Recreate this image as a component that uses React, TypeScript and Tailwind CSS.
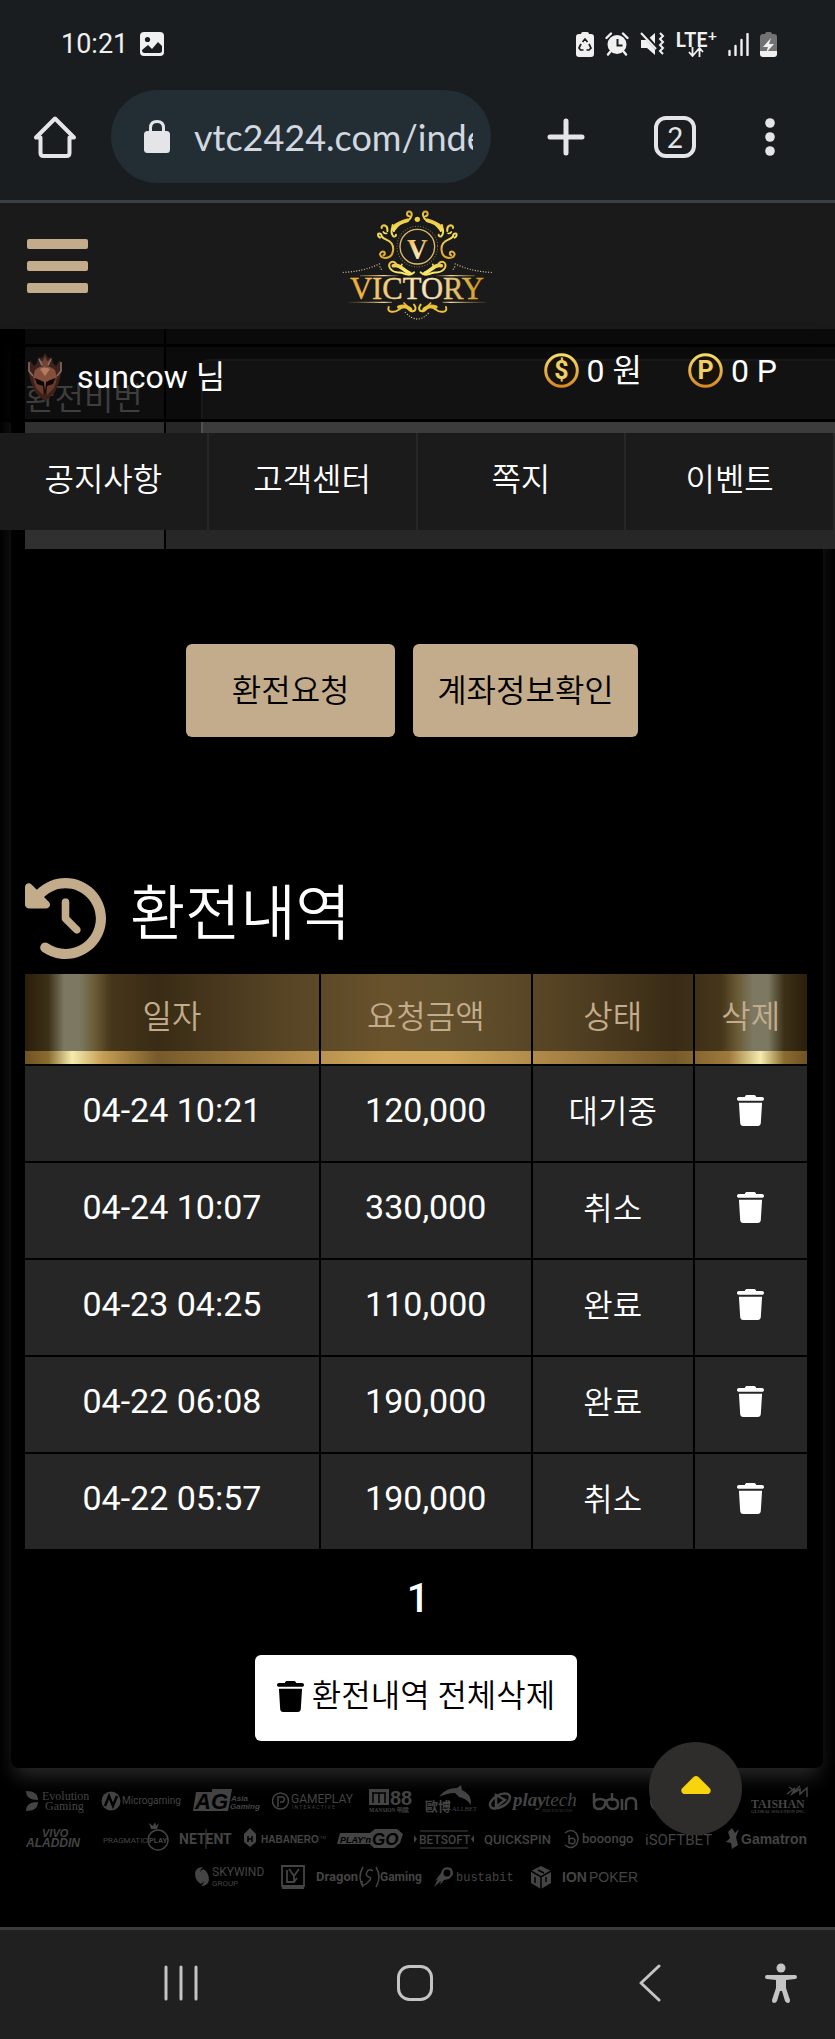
import React, { useState } from 'react';
import { FaTrash, FaClockRotateLeft } from 'react-icons/fa6';

interface Withdrawal {
  id: number;
  date: string;
  amount: string;
  status: string;
}

const initialRows: Withdrawal[] = [
  { id: 1, date: '04-24 10:21', amount: '120,000', status: '대기중' },
  { id: 2, date: '04-24 10:07', amount: '330,000', status: '취소' },
  { id: 3, date: '04-23 04:25', amount: '110,000', status: '완료' },
  { id: 4, date: '04-22 06:08', amount: '190,000', status: '완료' },
  { id: 5, date: '04-22 05:57', amount: '190,000', status: '취소' },
];

const menuItems = ['공지사항', '고객센터', '쪽지', '이벤트'];

// Phone status bar
const StatusBar: React.FC = () => (
  <div className="flex h-[88px] items-center justify-between pl-[61px] pr-[58px] font-normal text-[#f0f0f0]">
    <div className="flex items-center gap-3">
      <span className="text-[27px] leading-8">10:21</span>
      <svg width="24" height="24" viewBox="0 0 24 24">
        <rect width="24" height="24" rx="4" fill="currentColor" />
        <circle cx="7.5" cy="7.5" r="2.6" fill="#1a1d1f" />
        <path d="M2 18l6-5 4 4 6-7 4 4v4.500q0 2.500-2.500 2.500h-15Q2 21 2 18z" fill="#1a1d1f" />
      </svg>
    </div>
    <div className="flex items-center gap-[11px]">
      <svg width="18" height="25" viewBox="0 0 18 25">
        <path d="M5 2q0-2 2-2h4q2 0 2 2h2q3 0 3 3v17q0 3-3 3H3q-3 0-3-3V5q0-3 3-3z" fill="currentColor" />
        <path d="M6.500 10L9 7l2.500 3M13 12l2 4-2 2h-2.500M7.500 18H4.500l-1.500-2 2-4" fill="none" stroke="#1a1d1f" strokeWidth="1.7" />
      </svg>
      <svg width="24" height="24" viewBox="0 0 24 24">
        <circle cx="12" cy="12.500" r="9.500" fill="currentColor" />
        <path d="M1.500 6L6 1.500M22.500 6L18 1.500M5 20l-2 2.500M19 20l2 2.500" stroke="currentColor" strokeWidth="2.400" strokeLinecap="round" />
        <path d="M12.500 7v6.500h5" fill="none" stroke="#1a1d1f" strokeWidth="2" />
      </svg>
      <svg width="25" height="24" viewBox="0 0 25 24">
        <path d="M1 8h6l8-7v22l-8-7H1z" fill="currentColor" />
        <path d="M2 0l16 18" stroke="#1a1d1f" strokeWidth="4" />
        <path d="M1 1l15 16" stroke="currentColor" strokeWidth="2" />
        <path d="M20 1l3 3-3 3 3 3-3 3 3 3-3 3 3 3" fill="none" stroke="currentColor" strokeWidth="2" />
      </svg>
      <div className="flex flex-col items-center">
        <span className="flex font-['Lato',sans-serif] text-xl font-bold leading-4">
          LTE<span className="text-base leading-2">+</span>
        </span>
        <svg width="16" height="10" viewBox="0 0 16 10">
          <path d="M4.500 0v8M1 5l3.500 4L8 5M11.500 10V2M8 5l3.500-4L15 5" fill="none" stroke="currentColor" strokeWidth="1.800" />
        </svg>
      </div>
      <svg width="21" height="23" viewBox="0 0 21 23">
        <path d="M1.500 18v4M7.500 13v9M13.500 7v15M19.500 1v21" stroke="currentColor" strokeWidth="2.400" strokeLinecap="round" />
      </svg>
      <svg width="17" height="25" viewBox="0 0 17 25">
        <path d="M5 2q0-2 2-2h3q2 0 2 2h2q3 0 3 3v15H0V5q0-3 3-3z" fill="#707274" />
        <path d="M0 19h17v3q0 3-3 3H3q-3 0-3-3z" fill="currentColor" />
        <path d="M11 6L3 15h5l-2 6 8-9H9z" fill="currentColor" />
      </svg>
    </div>
  </div>
);

// Browser toolbar
const BrowserBar: React.FC = () => (
  <div className="flex h-[115px] items-start border-b-[3px] border-[#3b4047] pl-[34px] pr-[60px] pt-0.5 font-normal text-[#e3e5e8]">
    <div className="flex h-[93px] flex-1 items-center">
      <button type="button" aria-label="Home" className="shrink-0">
        <svg width="42" height="42" viewBox="0 0 42 42" fill="none" stroke="currentColor" strokeWidth="4" strokeLinejoin="round" strokeLinecap="round">
          <path d="M2 21.500h4.500V37q0 3 3 3h23q3 0 3-3V21.500H40L21 2.500z" />
        </svg>
      </button>
      <div className="ml-[35px] flex h-[93px] w-[380px] items-center gap-6 rounded-full bg-[#222e34] pl-[33px] pr-[18px]">
        <svg width="26" height="33" viewBox="0 0 26 33" className="shrink-0">
          <rect y="11" width="26" height="22" rx="3.500" fill="currentColor" />
          <path d="M6.500 12V8q0-6.500 6.500-6.500T19.500 8v4" fill="none" stroke="currentColor" strokeWidth="3" />
        </svg>
        <input
          aria-label="Address"
          readOnly
          defaultValue="vtc2424.com/index"
          className="min-w-0 flex-1 bg-transparent font-['Lato',sans-serif] text-4xl text-[#d3d8e0] outline-none"
        />
      </div>
      <div className="flex flex-1 items-center justify-between pl-14">
        <button type="button" aria-label="New tab">
          <svg width="38" height="38" viewBox="0 0 38 38" stroke="currentColor" strokeWidth="5" strokeLinecap="round">
            <path d="M19 3v32M3 19h32" />
          </svg>
        </button>
        <button
          type="button"
          aria-label="2 open tabs"
          className="flex size-[42px] items-center justify-center rounded-xl border-4 border-[#e3e5e8] font-['Lato',sans-serif] text-[28px] leading-8"
        >
          2
        </button>
        <button type="button" aria-label="More">
          <svg width="10" height="38" viewBox="0 0 10 38" fill="currentColor">
            <circle cx="5" cy="5" r="4.800" />
            <circle cx="5" cy="19" r="4.800" />
            <circle cx="5" cy="33" r="4.800" />
          </svg>
        </button>
      </div>
    </div>
  </div>
);

const LogoHalf: React.FC = () => (
  <g fill="none" stroke="url(#gold)" strokeLinecap="round">
    <path d="M238 48q-8-2-7-9t10-5q8 6 1 18-6 10-22 12-26 4-34 20-4 16 4 24 8 2 8-5" strokeWidth="6" />
    <path d="M232 60q-28 6-40 26" strokeWidth="11" />
    <path d="M188 74q-3 10 4 18" strokeWidth="6" />
    <path d="M172 92q2-14-9-17-9 0-8 8M150 112q-8-4-5-12 10-2 10 8 4 6 14 10 24 10 20 34-3 20-22 21-16 0-17-12 4-10 13-6 4 8-3 10" strokeWidth="6" />
    <path d="M160 95q4 6 10 4" strokeWidth="5" />
    <path d="M198 190q-6-8-14-5-10 6-5 17 6 12 22 14 14 0 28 6 14 4 23-6" strokeWidth="6" />
    <path d="M190 196q14-4 28 9 12 10 22 14" strokeWidth="11" />
    <path d="M216 192q-8 10 8 18" strokeWidth="5" />
    <path d="M176 320q-4 12 8 14 14 2 22-6 14-12 26-5 12 14 22 8 6-8-2-18" strokeWidth="6" />
    <path d="M206 320q20-8 36 7" strokeWidth="10" />
    <path d="M222 308l10 10" strokeWidth="5" />
    <path d="M40 216q60-2 112-27M150 200l8 13" stroke="#cdbb8c" strokeWidth="4" strokeDasharray="0 8" />
    <path d="M90 226h115M56 306h130" stroke="url(#fade)" strokeWidth="4" strokeLinecap="butt" />
  </g>
);

const VictoryLogo: React.FC = () => (
  <svg width="155" height="115" viewBox="30 26 465 345" role="img" aria-label="VICTORY">
    <defs>
      <linearGradient id="gold" gradientUnits="userSpaceOnUse" x1="150" y1="40" x2="250" y2="340">
        <stop offset="0" stopColor="#d59a22" />
        <stop offset="0.2" stopColor="#f7e35c" />
        <stop offset="0.4" stopColor="#e0a92c" />
        <stop offset="0.6" stopColor="#fbee72" />
        <stop offset="0.8" stopColor="#e6b02e" />
        <stop offset="1" stopColor="#f2d040" />
      </linearGradient>
      <linearGradient id="word" x1="0" x2="1">
        <stop offset="0" stopColor="#efa82c" />
        <stop offset="0.4" stopColor="#f6dfa6" />
        <stop offset="0.6" stopColor="#f8e8c0" />
        <stop offset="1" stopColor="#cf9410" />
      </linearGradient>
      <linearGradient id="fade" gradientUnits="userSpaceOnUse" x1="50" x2="210" y1="0" y2="0">
        <stop offset="0" stopColor="#6e5822" stopOpacity="0.200" />
        <stop offset="0.700" stopColor="#f1dd9c" />
        <stop offset="1" stopColor="#6e5822" stopOpacity="0.300" />
      </linearGradient>
    </defs>
    <LogoHalf />
    <g transform="translate(524 0) scale(-1 1)">
      <LogoHalf />
    </g>
    <circle cx="262" cy="57" r="8" fill="#f2cf3c" />
    <circle cx="262" cy="139" r="52" fill="none" stroke="#dcb86c" strokeWidth="4" />
    <circle cx="262" cy="139" r="61" fill="none" stroke="#9c8a58" strokeWidth="3" strokeLinecap="round" strokeDasharray="0 8" />
    <path d="M226 336q36 40 72 0" fill="none" stroke="#d8c68c" strokeWidth="4" strokeLinecap="round" strokeDasharray="0 8" />
    <text x="262" y="176" textAnchor="middle" fontFamily="Liberation Serif, serif" fontWeight="700" fontSize="86" fill="url(#word)">V</text>
    <text x="261" y="296" textAnchor="middle" fontFamily="Liberation Serif, serif" fontSize="92" fill="url(#word)" stroke="url(#word)" strokeWidth="1">VICTORY</text>
  </svg>
);

const RankBadge: React.FC = () => (
  <svg width="36" height="48" viewBox="0 0 36 48" className="shrink-0">
    <path d="M18 0l3 5 4-1 1 6 3 3 4-6 2 10-3 12-4 10-5 5-5 4-5-4-5-5-4-10L1 17 3 7l4 6 3-3 1-6 4 1z" fill="#3c221b" />
    <path d="M18 3l2 5 4-1-2 6h-8l-2-6 4 1z" fill="#6e4436" />
    <path d="M8 17q10-8 20 0l2 8-9 3-3 10-3-10-9-3z" fill="#84503d" />
    <path d="M13 16q5-3 10 0l-5 7z" fill="#b67c62" />
    <path d="M6 26l10 4v12l-7-7zM30 26l-10 4v12l7-7z" fill="#6a3a2b" />
    <path d="M8 25l9 4 1 10 1-10 9-4-2 6-6 2-2 9-2-9-6-2z" fill="#0e0908" />
    <path d="M2 9v9l4 5M34 9v9l-4 5M12 6l3 6M24 6l-3 6" fill="none" stroke="#8c7068" strokeWidth="1.500" />
  </svg>
);

const Coin: React.FC<{ letter: string }> = ({ letter }) => (
  <svg width="35" height="35" viewBox="0 0 35 35" className="shrink-0">
    <defs>
      <linearGradient id="coin" x1="0" y1="0" x2="0" y2="1">
        <stop offset="0" stopColor="#f4dc6a" />
        <stop offset="1" stopColor="#d98a22" />
      </linearGradient>
    </defs>
    <circle cx="17.500" cy="17.500" r="15.800" fill="#17120a" stroke="url(#coin)" strokeWidth="3" />
    <text x="17.500" y="26" textAnchor="middle" fontFamily="Roboto, sans-serif" fontWeight="700" fontSize="25" fill="#f0cf68">{letter}</text>
  </svg>
);

// Provider logos in the footer
const sans = 'Liberation Sans, sans-serif';
const serif = 'Liberation Serif, serif';
const roboto = 'Roboto, sans-serif';

const Logo: React.FC<{ w: number; children: React.ReactNode }> = ({ w, children }) => (
  <svg width={w} height="32" viewBox={`0 0 ${w} 32`} fill="currentColor" className="shrink-0">
    {children}
  </svg>
);

const ProvidersTop: React.FC = () => (
  <div className="flex items-center justify-between">
    <Logo w={64}>
      <path d="M0 6q12 0 12 9Q0 15 0 6zM0 26q12 0 12-9Q0 17 0 26z" />
      <text x="16" y="15" fontFamily={serif} fontSize="12">Evolution</text>
      <text x="19" y="25" fontFamily={serif} fontSize="12">Gaming</text>
    </Logo>
    <Logo w={80}>
      <circle cx="10" cy="16" r="9.500" />
      <path d="M4 21l4-10 4 10 4-10" fill="none" stroke="#000" strokeWidth="2.500" />
      <text x="21" y="19" fontFamily={roboto} fontSize="10">Microgaming</text>
    </Logo>
    <Logo w={68}>
      <path d="M3 7h16V4h20l-4 22H0z" />
      <text x="2" y="24" fontFamily={sans} fontWeight="700" fontStyle="italic" fontSize="22" fill="#000">AG</text>
      <text x="38" y="16" fontFamily={sans} fontWeight="700" fontStyle="italic" fontSize="8">Asia</text>
      <text x="37" y="24" fontFamily={sans} fontWeight="700" fontStyle="italic" fontSize="8">Gaming</text>
    </Logo>
    <Logo w={86}>
      <g fill="none" stroke="currentColor" strokeWidth="1.500">
        <circle cx="8.500" cy="16" r="8" />
        <path d="M6 22V12h5q3 2 0 5H8" />
      </g>
      <text x="19" y="18" fontFamily={roboto} fontSize="12">GAMEPLAY</text>
      <text x="20" y="24" fontFamily={roboto} fontSize="5">I N T E R A C T I V E</text>
    </Logo>
    <Logo w={44}>
      <path d="M0 4h20v16H0z" />
      <path d="M4 18V8M10 18V8M16 18V8M3 8h14" stroke="#000" strokeWidth="1.500" />
      <text x="21" y="20" fontFamily={sans} fontWeight="700" fontSize="20">88</text>
      <text x="0" y="27" fontFamily={serif} fontWeight="700" fontSize="5.500">MANSION 明陞</text>
    </Logo>
    <Logo w={52}>
      <path d="M14 12Q20 3 32 3l4-3 1 5q10 4 9 15-5-7-12-8l-4-4q-8 0-16 4z" />
      <text x="0" y="26" fontFamily="'Noto Sans CJK TC', sans-serif" fontWeight="700" fontSize="13">歐博</text>
      <text x="27" y="26" fontFamily={serif} fontSize="6.500">ALLBET</text>
    </Logo>
    <Logo w={93}>
      <g fill="none" stroke="currentColor" strokeWidth="2.500">
        <ellipse cx="12" cy="16" rx="11" ry="6" transform="rotate(-30 12 16)" />
        <path d="M8 22V10l9 5z" />
      </g>
      <text x="25" y="21" fontFamily={serif} fontWeight="700" fontStyle="italic" fontSize="19">play</text>
      <text x="57" y="21" fontFamily={serif} fontStyle="italic" fontSize="19">tech</text>
      <text x="54" y="27" fontFamily={serif} fontSize="3">SOURCE OF SUCCESS</text>
    </Logo>
    <Logo w={46}>
      <g fill="none" stroke="currentColor" strokeWidth="2.500">
        <path d="M2 8v11q0 5 5 5t6-5 7-5 6 5-5 5-6-5-7-5-6 5M20 8v8M30 14v11M34 25v-7q0-5 5-5t5 5v7" />
      </g>
    </Logo>
    <Logo w={90}>
      <path d="M2 15q0 10 10 10" fill="none" stroke="currentColor" strokeWidth="4" />
    </Logo>
    <Logo w={58}>
      <path d="M36 9l8-6-3 6 8-5v5l7-6v9M38 2l6 4 5-5" fill="none" stroke="currentColor" strokeWidth="1.500" />
      <text x="0" y="23" fontFamily={serif} fontWeight="700" fontSize="12">TAISHAN</text>
      <text x="0" y="28" fontFamily={serif} fontWeight="700" fontSize="4.500">GLOBAL SOLUTION INC.</text>
    </Logo>
  </div>
);

const ProvidersMiddle: React.FC = () => (
  <div className="flex items-center justify-between">
    <Logo w={66}>
      <text x="16" y="14" fontFamily={sans} fontWeight="700" fontStyle="italic" fontSize="11">VIVO</text>
      <text x="0" y="24" fontFamily={sans} fontWeight="700" fontStyle="italic" fontSize="12">ALADDIN</text>
    </Logo>
    <Logo w={66}>
      <text x="0" y="20" fontFamily={roboto} fontSize="8">PRAGMATIC</text>
      <circle cx="55" cy="17" r="10" fill="none" stroke="currentColor" strokeWidth="1.500" />
      <text x="46" y="20" fontFamily={roboto} fontWeight="700" fontSize="7.500">PLAY</text>
      <path d="M48 6l-2-6 4 3 2-4 1 4 3-3-2 6z" />
    </Logo>
    <Logo w={54}>
      <text x="0" y="21" fontFamily={roboto} fontWeight="700" fontSize="14">NETENT</text>
      <path d="M27 6v20" stroke="currentColor" />
    </Logo>
    <Logo w={82}>
      <path d="M6 5l6 6v8l-6 5-6-5v-8z" />
      <path d="M4 13v6M8 13v6M4 16h4" stroke="#000" strokeWidth="1.500" />
      <text x="17" y="20" fontFamily={sans} fontWeight="700" fontSize="10">HABANERO</text>
      <text x="76" y="16" fontFamily={sans} fontSize="4">TM</text>
    </Logo>
    <Logo w={67}>
      <path d="M4 10h30l5-4h22l6 5-3 9-6 5H38l-4-4H1z" />
      <text x="4" y="20" fontFamily={sans} fontWeight="700" fontStyle="italic" fontSize="9" fill="#000">PLAY'n</text>
      <text x="36" y="22" fontFamily={sans} fontWeight="700" fontStyle="italic" fontSize="17" fill="#000">GO</text>
    </Logo>
    <Logo w={60}>
      <path d="M0 12l3 4-3 4zM60 12l-3 4 3 4z" />
      <text x="5" y="21" fontFamily={roboto} fontWeight="500" fontSize="12">BETSOFT</text>
      <path d="M6 8h48M6 25h48" stroke="currentColor" strokeWidth="1" />
    </Logo>
    <Logo w={68}>
      <text x="0" y="21" fontFamily={roboto} fontWeight="500" fontSize="13">QUICKSPIN</text>
    </Logo>
    <Logo w={72}>
      <path d="M2 10q6-5 11 0 4 6 0 12-5 5-11 0M6 12v8q6 2 6-2t-6-2" fill="none" stroke="currentColor" strokeWidth="1.500" />
      <text x="19" y="20" fontFamily={roboto} fontWeight="500" fontSize="13">booongo</text>
    </Logo>
    <Logo w={70}>
      <text x="0" y="22" fontFamily={roboto} fontSize="15">iSOFTBET</text>
    </Logo>
    <Logo w={83}>
      <path d="M2 9l4-4 3 5 4-4-3 8 2 8-6 4-1-6-5-1 4-4z" />
      <text x="15" y="21" fontFamily={sans} fontWeight="700" fontSize="14">Gamatron</text>
    </Logo>
  </div>
);

const ProvidersBottom: React.FC = () => (
  <div className="flex items-center justify-center gap-2.5">
    <Logo w={77}>
      <path d="M1 12q1-6 8-6Q4 10 8 15q4 5-1 8Q1 20 1 12zM15 19q-1 6-8 6 5-4 1-9-4-5 1-8 6 3 6 11z" />
      <text x="18" y="15" fontFamily={roboto} fontSize="12">SKYWIND</text>
      <text x="18" y="25" fontFamily={roboto} fontSize="8">GROUP</text>
    </Logo>
    <Logo w={25}>
      <path d="M1 5h22v20H1zM6 9v12h7l3-4M8 8l5 7 5-7M13 15v6" fill="none" stroke="currentColor" strokeWidth="1.800" />
      <path d="M1 25h22v3H1z" />
    </Logo>
    <Logo w={107}>
      <text x="0" y="20" fontFamily={roboto} fontWeight="700" fontSize="13">Dragon</text>
      <path d="M57 10q-4-3-6 1t2 5-2 6-5-2M60 6q6 10 0 20M47 6q-6 10 0 20" fill="none" stroke="currentColor" strokeWidth="1.500" />
      <text x="64" y="20" fontFamily={roboto} fontWeight="700" fontSize="12">Gaming</text>
    </Logo>
    <Logo w={87}>
      <path d="M8 12q2-8 10-5 5 6-2 11l-5 1-4 5 1-4-7 6 4-8-3 2z" />
      <circle cx="14" cy="12" r="3.500" fill="#000" />
      <text x="23" y="20" fontFamily="Liberation Mono, monospace" fontSize="12">bustabit</text>
    </Logo>
    <Logo w={22}>
      <path d="M11 5l10 5v12l-10 6-10-6V10z" />
      <path d="M1 10l10 6 10-6M11 16v12M5 16v6M16 16v5M8 9l6 3" fill="none" stroke="#000" strokeWidth="1.500" />
    </Logo>
    <Logo w={80}>
      <text x="0" y="21" fontFamily={sans} fontWeight="700" fontSize="14">ION</text>
      <text x="27" y="21" fontFamily={sans} fontSize="14">POKER</text>
    </Logo>
  </div>
);

const App: React.FC = () => {
  const [rows, setRows] = useState<Withdrawal[]>(initialRows);

  const handleDelete = (id: number) => {
    setRows((prev) => prev.filter((row) => row.id !== id));
  };

  return (
    <div className="flex min-h-screen flex-col overflow-x-hidden bg-black font-['Roboto','Noto_Sans_CJK_KR',sans-serif] text-[32px] font-[350] leading-10 text-white">
      <div className="bg-[#1a1d1f]">
        <StatusBar />
        <BrowserBar />
      </div>

      <header className="grid h-[126px] shrink-0 grid-cols-3 items-center bg-[#1a1a1a] px-[27px]">
        <button type="button" aria-label="메뉴" className="flex w-[61px] flex-col gap-3">
          <span className="h-2.5 w-full rounded-xs bg-[#c2ac8b]" />
          <span className="h-2.5 w-full rounded-xs bg-[#c2ac8b]" />
          <span className="h-2.5 w-full rounded-xs bg-[#c2ac8b]" />
        </button>
        <a href="#home" className="justify-self-center">
          <VictoryLogo />
        </a>
      </header>

      <div className="relative">
        <div className="absolute inset-x-0 top-0 z-10">
          <div className="flex h-[93px] items-start justify-between border-b-[3px] border-black bg-black/70 pl-[27px] pr-[58px] pt-6">
            <div className="flex items-center gap-3.5">
              <RankBadge />
              <span className="font-normal">suncow 님</span>
            </div>
            <div className="flex items-center gap-[46px] font-normal leading-8">
              <span className="flex items-center gap-2">
                <Coin letter="$" />0 원
              </span>
              <span className="flex items-center gap-2">
                <Coin letter="P" />0 P
              </span>
            </div>
          </div>
          <nav className="mt-[11px] grid h-[97px] grid-cols-4 bg-[#1b1b1b]">
            {menuItems.map((item) => (
              <a key={item} href="#menu" className="flex items-center justify-center border-r-2 border-[#272727] pb-1">
                {item}
              </a>
            ))}
          </nav>
        </div>

        <main className="ml-[11px] mr-3 rounded-b-lg bg-black pb-[27px] pl-3.5 pr-4 shadow-[0_12px_20px_-4px_#2a2a2a]">
          <form className="-mr-7 grid grid-cols-[139px_1fr] gap-x-0.5 gap-y-[3px]">
            <div className="h-[15px] bg-[#222]" />
            <div className="h-[15px] bg-[#222]" />
            <label htmlFor="pin" className="h-[202px] bg-[#303030] pt-8 text-[#d0d0d0]">
              환전비번
            </label>
            <div className="h-[202px] bg-[#272727] pl-[35px] pt-3">
              <input
                id="pin"
                type="password"
                className="block h-40 w-full rounded-tl-lg border-l-2 border-t-2 border-[#505050] bg-[#3c3c3c] px-4 outline-none"
              />
            </div>
          </form>

          <div className="mt-[95px] flex justify-center gap-[18px] pr-2 text-black">
            <button type="button" className="h-[93px] min-w-[209px] rounded-md bg-[#c2ac8b] px-6">
              환전요청
            </button>
            <button type="button" className="h-[93px] rounded-md bg-[#c2ac8b] px-6">
              계좌정보확인
            </button>
          </div>

          <div className="mt-[141px] flex items-center gap-6">
            <FaClockRotateLeft className="size-[81px] text-[#c2ac8b]" />
            <h2 className="pb-2 text-[60px] leading-[65px]">환전내역</h2>
          </div>

          <table className="mt-[15px] w-full table-fixed border-collapse text-center">
            <colgroup>
              <col className="w-[37.7%]" />
              <col className="w-[27.1%]" />
              <col className="w-[20.7%]" />
              <col className="w-[14.5%]" />
            </colgroup>
            <thead>
              <tr className="h-[91px] bg-[linear-gradient(90deg,#6e5222,#8a6c30_3%,#f5ecb0_6%,#c49c54_10%,#765a2a_17%,#a88345_32%,#cfa85c_46%,#cfa85c_54%,#a88345_68%,#765a2a_83%,#a07a3c_90%,#f5ecb0_94%,#8a6c30_97%,#6e5222),linear-gradient(90deg,#2a1e0c,#3c3018_3%,#7c7862_5%,#7c7862_7%,#6a5a34_9%,#46361b_11%,#392b15_17%,#554324_32%,#68522c_46%,#62502d_54%,#554324_68%,#392b15_83%,#46361b_89%,#6a5a34_91%,#7c7862_93%,#7c7862_95%,#3c3018_97%,#2a1e0c)] bg-[length:100%_14px,100%_100%] bg-[position:bottom,top] bg-no-repeat text-[#c2ac8b]">
                <th className="border-b-2 border-r-2 border-black pb-1 font-[350]">일자</th>
                <th className="border-b-2 border-r-2 border-black pb-1 font-[350]">요청금액</th>
                <th className="border-b-2 border-r-2 border-black pb-1 font-[350]">상태</th>
                <th className="border-b-2 border-black pb-1 font-[350]">삭제</th>
              </tr>
            </thead>
            <tbody>
              {rows.map((row) => (
                <tr key={row.id} className="h-[97px] bg-[#262626]">
                  <td className="border-b-2 border-r-2 border-black pb-2 text-[34px] font-normal">{row.date}</td>
                  <td className="border-b-2 border-r-2 border-black pb-2 text-[34px] font-normal">{row.amount}</td>
                  <td className="border-b-2 border-r-2 border-black pb-1">{row.status}</td>
                  <td className="border-b-2 border-black pb-3">
                    <button type="button" aria-label="삭제" className="align-middle" onClick={() => handleDelete(row.id)}>
                      <FaTrash className="h-[31px] w-[27px]" />
                    </button>
                  </td>
                </tr>
              ))}
            </tbody>
          </table>

          <div className="mb-2 flex h-24 items-center justify-center pl-1 text-[40px] font-medium">
            <a href="#page-1">1</a>
          </div>

          <div className="flex justify-center">
            <button
              type="button"
              className="flex h-[86px] items-center gap-2 rounded-md bg-white px-[22px] pb-1 text-black"
              onClick={() => setRows([])}
            >
              <FaTrash className="h-[31px] w-[27px]" />
              환전내역 전체삭제
            </button>
          </div>
        </main>
      </div>

      <footer className="flex flex-1 flex-col gap-1.5 px-[26px] pt-[17px] font-normal text-[#444]">
        <ProvidersTop />
        <ProvidersMiddle />
        <ProvidersBottom />
      </footer>

      <button
        type="button"
        aria-label="맨 위로"
        className="fixed bottom-[204px] right-[93px] z-20 flex size-[93px] items-center justify-center rounded-full bg-[#2f2d2c] pb-2 text-[#f8d40e]"
        onClick={() => window.scrollTo({ top: 0, behavior: 'smooth' })}
      >
        <svg width="30" height="18" viewBox="0 0 30 18" fill="currentColor">
          <path d="M12.500 1q2.500-2 5 0L29 12.500q2 3.500-1.500 5.500h-25Q-1 16 1 12.500z" />
        </svg>
      </button>

      {/* system navigation */}
      <div className="grid h-28 shrink-0 grid-cols-[199px_1fr_204px] items-center border-t-[3px] border-[#3c3c3c] bg-[#202020] pb-1 text-[#c4c4c4]">
        <button type="button" aria-label="Recent apps" className="justify-self-end">
          <svg width="36" height="36" viewBox="0 0 36 36" stroke="currentColor" strokeWidth="3" strokeLinecap="round">
            <path d="M3 2v32M18 2v32M33 2v32" />
          </svg>
        </button>
        <button type="button" aria-label="Home screen" className="justify-self-center">
          <svg width="36" height="36" viewBox="0 0 36 36" fill="none" stroke="currentColor" strokeWidth="3">
            <rect x="1.500" y="1.500" width="33" height="33" rx="11" />
          </svg>
        </button>
        <div className="flex items-center justify-between pl-2 pr-[38px]">
          <button type="button" aria-label="Back">
            <svg width="22" height="38" viewBox="0 0 22 38" fill="none" stroke="currentColor" strokeWidth="3" strokeLinecap="round" strokeLinejoin="round">
              <path d="M20 2L2 19l18 17" />
            </svg>
          </button>
          <button type="button" aria-label="Accessibility">
            <svg width="32" height="40" viewBox="0 0 32 40" fill="currentColor">
              <circle cx="16" cy="5" r="4.500" />
              <path d="M2 12h28q2 0 2 2t-2 2l-9 1v8l4 12q0 3-2 3t-3-2l-3-10h-2l-3 10q-1 2-3 2t-2-3l4-12v-8l-9-1q-2 0-2-2t2-2z" />
            </svg>
          </button>
        </div>
      </div>
    </div>
  );
};

export default App;
